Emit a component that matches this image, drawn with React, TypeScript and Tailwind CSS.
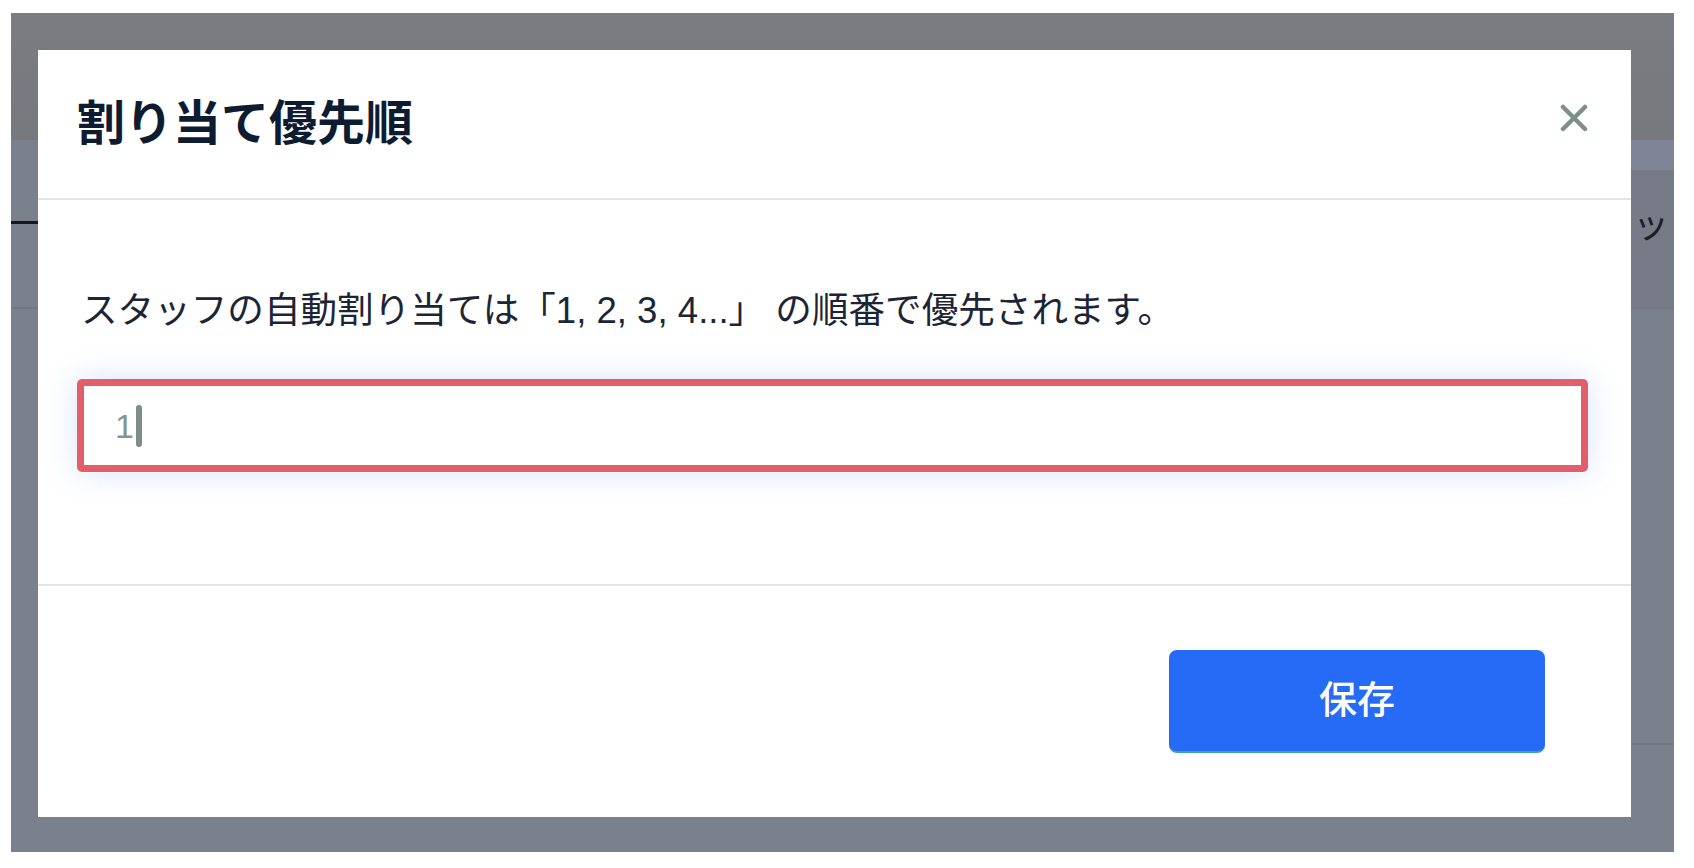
import { useState } from "react";

const font = "font-['Liberation_Sans','Noto_Sans_CJK_JP',sans-serif]";

function CloseIcon() {
  return (
    <svg width="28" height="28" viewBox="0 0 28 28" aria-hidden="true">
      <path
        d="M3 3 L25 25 M25 3 L3 25"
        stroke="#7e8f8a"
        strokeWidth="4.5"
        strokeLinecap="round"
        fill="none"
      />
    </svg>
  );
}

export default function App() {
  const [value] = useState("1");

  return (
    <div className={`min-h-screen bg-white pt-[13px] pl-[11px] pr-[20px] pb-[16px] ${font}`}>
      <div className="relative h-[839px] overflow-hidden bg-[#7b808d] pl-[27px] pt-[37px] pr-[43px] pb-[35px]">
        {/* dimmed page behind the dialog */}
        <div className="absolute inset-x-0 top-0 h-[127px] bg-gradient-to-b from-[#7b7c82] to-[#78797f]" />
        <div className="absolute right-0 top-[127px] h-[30px] w-[60px] bg-[#7f8597]" />
        <div className="absolute right-0 top-[157px] h-[138px] w-[60px] bg-[#777b88]" />
        <div className="absolute left-0 top-[208px] h-[3px] w-[27px] bg-[#15171c]" />
        <div className="absolute inset-x-0 top-[294px] h-[2px] bg-[#737783]" />
        <div className="absolute right-0 top-[730px] h-[2px] w-[60px] bg-[#737783]" />
        <div className="absolute left-[1622px] top-[186px] text-[36px] leading-[54px] text-[#1b1e27]">
          ッ
        </div>

        <div className="relative flex h-full flex-col bg-white">
          <div className="flex h-[148px] items-center justify-between pl-[39px] pr-[43px]">
            <h2 className="text-[48px] font-bold leading-none text-[#0e1c31]">割り当て優先順</h2>
            <button type="button" aria-label="閉じる" className="mb-[13px] flex items-center justify-center">
              <CloseIcon />
            </button>
          </div>
          <div className="h-[2px] bg-[#e3e5e2]" />

          <div className="flex h-[384px] flex-col pl-[39px] pr-[43px] pt-[84px]">
            <p className="ml-[4px] text-[36.6px] leading-[54px] text-[#1c2536] whitespace-nowrap">
              スタッフの自動割り当ては「1, 2, 3, 4...」 の順番で優先されます。
            </p>
            <div className="mt-[41px] flex h-[93px] items-center rounded-[5px] border-[7px] border-[#e25e6a] bg-white pl-[31px] shadow-[0_0_32px_rgba(70,130,240,0.22)]">
              <span className="text-[34px] leading-none text-[#8a948f]">{value}</span>
              <span className="ml-[2px] h-[42px] w-[6px] rounded-full bg-[#7f8d88]" />
            </div>
          </div>
          <div className="h-[2px] bg-[#e3e5e2]" />

          <div className="flex flex-1 items-center justify-end pr-[86px]">
            <button
              type="button"
              className="flex h-[103px] w-[376px] items-center justify-center rounded-[8px] border-b-2 border-[#3f9fb4] bg-[#256bf5] text-[38px] font-medium text-white"
            >
              保存
            </button>
          </div>
        </div>
      </div>
    </div>
  );
}
